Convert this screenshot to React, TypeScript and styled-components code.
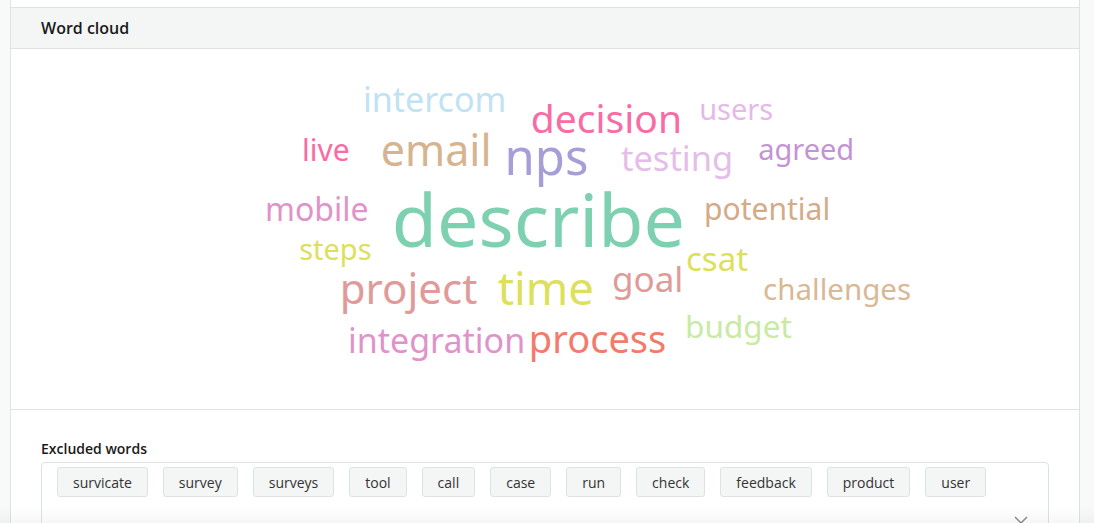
import styled, { createGlobalStyle } from "styled-components"

const GlobalStyle = createGlobalStyle`
    html, body {
        margin: 0;
        padding: 0;
        background: #f8f9f9;
        font-family: 'Open Sans', 'Noto Sans', sans-serif;
        color: #1c1c1c;
    }
`

const Page = styled.div`
    padding: 0 14px 0 10px;
    min-height: 523px;
    overflow: hidden;
`

const Column = styled.div`
    background: #ffffff;
    border-left: 1px solid #dde3e3;
    border-right: 1px solid #dde3e3;
    padding-top: 7px;
    min-height: 516px;
`

const CardHeader = styled.div`
    height: 40px;
    display: flex;
    align-items: center;
    padding: 0 30px;
    background: #f4f6f6;
    border-top: 1px solid #dde3e3;
    border-bottom: 1px solid #dde3e3;
`

const CardTitle = styled.h3`
    margin: 0;
    font-size: 16px;
    font-weight: 600;
    color: #1a1a1a;
`

const CloudArea = styled.div`
    height: 360px;
    border-bottom: 1px solid #dde3e3;
    svg {
        display: block;
    }
`

const CloudWord = styled.text`
    font-family: 'Noto Sans', 'Open Sans', sans-serif;
    font-weight: 400;
`

const ExcludedSection = styled.div`
    padding: 30px 30px 0;
`

const SectionLabel = styled.div`
    font-size: 14px;
    line-height: 18px;
    font-weight: 600;
    color: #1a1a1a;
    margin-bottom: 4px;
`

const TagBox = styled.div`
    position: relative;
    border: 1px solid #dde3e3;
    border-radius: 4px;
    padding: 4px 15px 0;
    min-height: 90px;
    display: flex;
    flex-wrap: wrap;
    align-content: flex-start;
    gap: 15px;
`

const Tag = styled.span`
    height: 28px;
    display: inline-flex;
    align-items: center;
    padding: 0 15px;
    background: #f4f6f6;
    border: 1px solid #dde3e3;
    border-radius: 3px;
    font-size: 14px;
    color: #333333;
`

const Chevron = styled.svg`
    position: absolute;
    right: 20px;
    top: 53px;
`

const BottomShade = styled.div`
    position: fixed;
    left: 0;
    right: 0;
    bottom: 0;
    height: 16px;
    background: linear-gradient(rgba(0, 0, 0, 0), rgba(0, 0, 0, 0.035));
    pointer-events: none;
`

// word, left edge (page px), baseline (page px), font size, colour
const words: [string, number, number, number, string][] = [
    ["intercom", 364, 112, 34, "#bfe3f3"],
    ["decision", 532, 133, 39, "#f76ca5"],
    ["users", 700, 120, 29, "#e4b9e8"],
    ["live", 303, 161, 30, "#f76ca5"],
    ["email", 382, 166, 43, "#d6b48f"],
    ["nps", 506, 175, 49, "#a59ed8"],
    ["testing", 622, 171, 34.5, "#e5bde9"],
    ["agreed", 759, 160, 29, "#c493d6"],
    ["mobile", 266, 221, 32, "#df93c9"],
    ["describe", 394, 247, 73.5, "#7dd1b1"],
    ["potential", 705, 220, 30, "#d4aa87"],
    ["steps", 300, 260, 29, "#dde05b"],
    ["csat", 687, 271, 33, "#dde05b"],
    ["project", 341, 304, 42, "#e09b99"],
    ["time", 499, 305, 45.5, "#dde05b"],
    ["goal", 613, 292, 35, "#e09b99"],
    ["challenges", 764, 300, 29.5, "#d9b895"],
    ["budget", 686, 338, 31.5, "#c8eaa2"],
    ["integration", 349, 353, 34, "#df93c9"],
    ["process", 530, 353, 38, "#f27b6c"],
]

const excluded = ["survicate", "survey", "surveys", "tool", "call", "case", "run", "check", "feedback", "product", "user"]

const CLOUD_X = 11
const CLOUD_Y = 49

const WordCloud = () => (
    <CloudArea>
        <svg width="100%" height="360" viewBox={`${CLOUD_X} ${CLOUD_Y} 1068 360`} preserveAspectRatio="xMinYMin meet">
            {words.map(([w, x, y, size, color]) => (
                <CloudWord key={w} x={x - size * 0.03} y={y} fontSize={size} fill={color}>
                    {w}
                </CloudWord>
            ))}
        </svg>
    </CloudArea>
)

const App = () => {
    return (
        <Page>
            <GlobalStyle />
            <Column>
                <CardHeader>
                    <CardTitle>Word cloud</CardTitle>
                </CardHeader>
                <WordCloud />
                <ExcludedSection>
                    <SectionLabel>Excluded words</SectionLabel>
                    <TagBox>
                        {excluded.map(t => <Tag key={t}>{t}</Tag>)}
                        <Chevron width="14" height="8" viewBox="0 0 14 8">
                            <path d="M1 1l6 6 6-6" fill="none" stroke="#8a8f94" strokeWidth="1.5" />
                        </Chevron>
                    </TagBox>
                </ExcludedSection>
            </Column>
            <BottomShade />
        </Page>
    )
}

export default App
